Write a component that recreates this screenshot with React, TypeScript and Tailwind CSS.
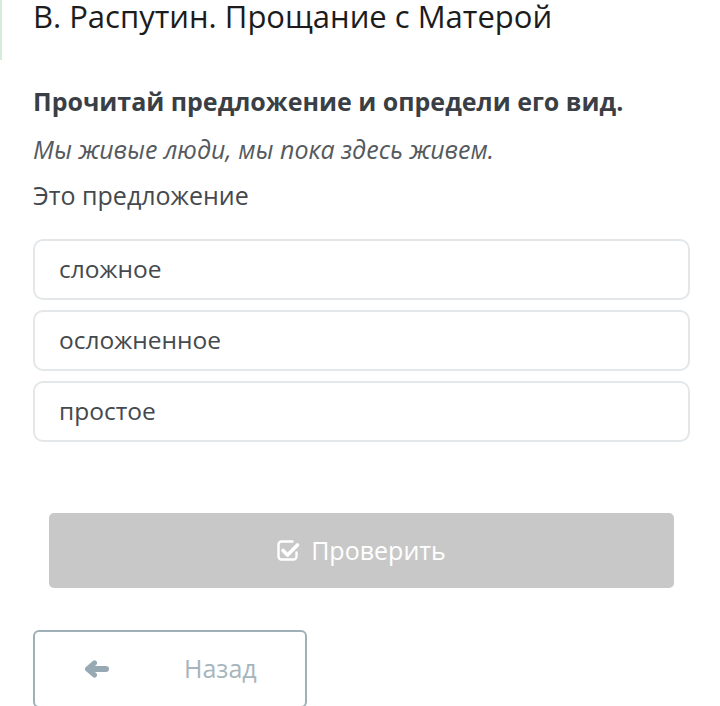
function CheckSquare() {
  return (
    <svg width="24" height="24" viewBox="0 0 24 24" fill="none" stroke="currentColor" strokeLinecap="round" strokeLinejoin="round">
      <path d="M19.5 13.5v4a3 3 0 0 1-3 3h-12a3 3 0 0 1-3-3v-12a3 3 0 0 1 3-3h11" strokeWidth="2.4" />
      <path d="M6 11.5l4.5 4.5 10-10" strokeWidth="3.6" />
    </svg>
  );
}

function ArrowLeft() {
  return (
    <svg width="25" height="18" viewBox="0 0 25 18" fill="none" stroke="currentColor" strokeLinecap="round" strokeLinejoin="round">
      <path d="M22 9H5" strokeWidth="6" />
      <path d="M10.5 3L3.5 9l7 6" strokeWidth="5" />
    </svg>
  );
}

const options = ["сложное", "осложненное", "простое"];

export default function App() {
  return (
    <div className="w-[720px] h-[706px] overflow-hidden bg-white relative" style={{ fontFamily: '"Open Sans", sans-serif' }}>
      <div className="absolute left-0 top-0 w-[2px] h-[60px] bg-[#d5ecd9]" />
      <div className="pl-[33px] pr-[30px]">
        <h1 className="text-[31px] leading-[36px] text-[#1c1c1c] -mt-[2px]">В. Распутин. Прощание с Матерой</h1>
        <p className="mt-[50px] text-[25px] leading-[34px] font-bold text-[#3a3f45]">Прочитай предложение и определи его вид.</p>
        <p className="mt-[14px] text-[25px] leading-[34px] italic text-[#555a5e]">Мы живые люди, мы пока здесь живем.</p>
        <p className="mt-[12px] text-[25px] leading-[34px] text-[#45494d]">Это предложение</p>
        <div className="mt-[27px] flex flex-col gap-[10px]">
          {options.map((o) => (
            <div key={o} className="h-[61px] rounded-[10px] border-2 border-[#e3e7e9] flex items-center pl-[24px] text-[24.5px] text-[#45494d]">
              {o}
            </div>
          ))}
        </div>
        <div className="mt-[71px] mx-[16px] h-[75px] rounded-[5px] bg-[#c8c8c8] flex items-center justify-center gap-[10px] text-white text-[25px]">
          <CheckSquare />
          <span>Проверить</span>
        </div>
        <div className="mt-[42px] w-[274px] h-[78px] rounded-[6px] border-2 border-[#9fb0b8] flex items-center text-[#a6b5bc] text-[25px]">
          <span className="ml-[49px] text-[#97aab3] flex"><ArrowLeft /></span>
          <span className="ml-[75px]">Назад</span>
        </div>
      </div>
    </div>
  );
}
